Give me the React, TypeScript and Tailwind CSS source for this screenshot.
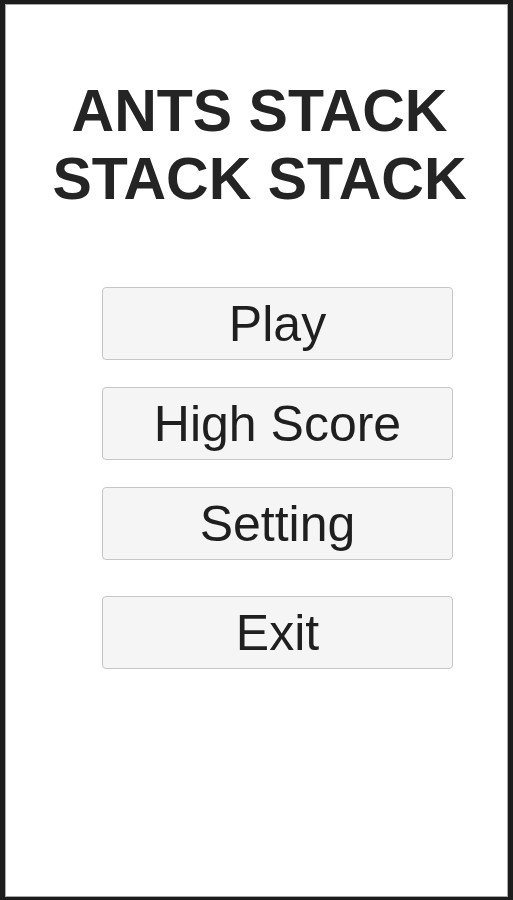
export default function App() {
  const buttons = [
    { label: "Play", mt: "mt-[74px]" },
    { label: "High Score", mt: "mt-[27px]" },
    { label: "Setting", mt: "mt-[27px]" },
    { label: "Exit", mt: "mt-[36px]" },
  ];
  return (
    <div className="w-[513px] h-[900px] bg-[#1c1c1c] pt-[4px] pl-[5px]">
      <div
        className="w-[503px] h-[893px] bg-white border border-[#a8a8a8] flex flex-col"
        style={{ fontFamily: '"Liberation Sans", Arial, sans-serif' }}
      >
        <h1 className="mt-[72px] ml-[6px] text-center text-[59px] leading-[68px] font-bold text-[#242424]">
          ANTS STACK
          <br />
          STACK STACK
        </h1>
        {buttons.map((b) => (
          <button
            key={b.label}
            className={`${b.mt} ml-[96px] w-[351px] h-[73px] flex items-center justify-center bg-[#f5f5f5] border border-[#c6c6c6] rounded-[4px] text-[50px] leading-none text-[#1f1f1f]`}
          >
            {b.label}
          </button>
        ))}
      </div>
    </div>
  );
}
